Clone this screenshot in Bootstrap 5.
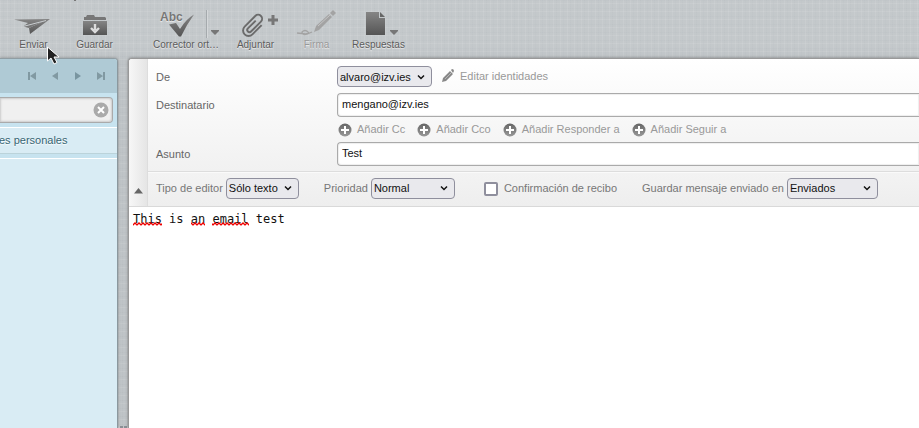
<!DOCTYPE html>
<html lang="es">
<head>
<meta charset="utf-8">
<meta name="viewport" content="width=device-width, initial-scale=1">
<title>Redactar</title>
<link href="https://cdn.jsdelivr.net/npm/bootstrap@5.3.0/dist/css/bootstrap.min.css" rel="stylesheet">
<style>
body{font:11px/16px "Liberation Sans",Arial,sans-serif;color:#666;
 background:repeating-linear-gradient(90deg,rgba(255,255,255,.08) 0 1px,transparent 1px 3px,rgba(70,80,90,.02) 3px 4px,transparent 4px 7px),
 repeating-linear-gradient(0deg,rgba(255,255,255,.08) 0 1px,transparent 1px 3px,rgba(70,80,90,.02) 3px 4px,transparent 4px 8px),#bfc4c7}
.toolbar{height:58px;padding-left:3px;background:linear-gradient(rgba(255,255,255,.08) 80%,rgba(255,255,255,0))}
.tool{width:61px;font-size:10px;line-height:16px;color:#5c5c5c;padding:0;border:0;background:none;text-shadow:0 1px 1px #eee;white-space:nowrap}
.tool svg{display:block;margin:8px auto 0;width:60px;height:29px}
.tool:disabled{color:#999;opacity:1}
.tool-wide{width:66px;margin-left:28px}
.tool-reply{margin-left:1px}
.drop{width:16px;height:28px;margin-top:10px;padding:0 0 0 4px;border:0;background:none}
.drop svg{display:block;margin-top:16px}
.split{margin-left:-13px;margin-right:3px;border-left:1px solid #a5aaad;box-shadow:inset 1px 0 #d5d8da}
.more{margin-left:-23px}
.side{width:118px;border-top:1px solid #909da3;border-right:1px solid #8b989e;background:#d9ecf4;border-radius:0 4px 0 0;box-shadow:0 0 3px #888}
.pager{height:34px;background:#afcad5;border-radius:0 3px 0 0;padding-right:8px;gap:7px}
.pager button{width:16px;height:16px;padding:0;border:0;background:none}
.pager svg,.add svg,.edit svg,.clear svg,.fold svg{display:block}
.find{height:35px;background:#c7e3ef;border-bottom:1px solid #fff;padding:4px 4px 0 0}
.find input{height:26px;width:100%;border:1px solid #aaa;border-left:0;border-radius:0 4px 4px 0;background:#f0f0f0;box-shadow:inset 0 0 2px 1px #ccc;padding:0 24px 0 4px;outline:0}
.clear{right:8px;top:9px;padding:0;border:0;background:none}
.folder{height:26px;line-height:24px;color:#376572;text-decoration:none;border-bottom:1px solid #bbd3da;text-shadow:0 1px 1px #fff;white-space:nowrap;margin-left:-1px}
.space{height:5px;background:#c7e3ef;border-bottom:1px solid #fff}
.splitter{width:10px;gap:1px}
.splitter i{width:3px;height:2px;background:#8a8f95}
.compose{border:solid #999;border-width:1px 0 0 1px;border-radius:4px 0 0 0;background:#fff;box-shadow:0 0 3px #777;overflow:hidden;min-width:0}
.heads{border-bottom:1px solid #d9d9d9;box-shadow:0 1px 2px #eee}
.fold{width:19px;border:0;border-right:1px solid #ddd;background:linear-gradient(90deg,#f7f7f7,#e5e5e5);padding:0 0 12px 5px}
.fields{background:linear-gradient(#fff,#f1f1f1);padding:7px 0 5px 8px;border-bottom:1px solid #ddd}
.line{display:grid;grid-template-columns:181px minmax(0,1fr);align-items:center}
.line-from{margin-bottom:6px}
.txt{height:24px;width:100%;border:1px solid #aaa;border-right:0;border-radius:4px 0 0 4px;padding:0 4px 2px;color:#111;background:#fff;box-shadow:inset 0 0 1px 1px #eee;outline:0}
.pick{height:21px;border:1px solid #8f8f9d;border-radius:4px;color:#111;padding:0 14px 0 2px;appearance:none;
 background:#e9e9ed url("data:image/svg+xml,%3Csvg xmlns='http://www.w3.org/2000/svg' width='8' height='6'%3E%3Cpath d='M1 1.5l3 3 3-3' fill='none' stroke='%23111' stroke-width='1.5'/%3E%3C/svg%3E") no-repeat right 6px center}
.from{width:95px}.kind{width:73px}.prio{width:84px}.sent{width:91px}
.edit,.add{color:#999;text-decoration:none}
.edit{gap:5px;margin-left:9px;padding-bottom:2px}
.add{gap:5px}
.adds{height:25px;gap:12px;padding-left:1px}
.adds span{padding-bottom:1px}
.options{height:34px;padding:0 0 4px 8px;background:linear-gradient(#f3f3f3,#eee);border-top:1px solid #fafafa;white-space:nowrap}
.options label{color:#777}
.options .pick{margin-left:3px;margin-top:1px}
.next{margin-left:25px}
.receipt{width:14px;height:14px;appearance:none;border:2px solid #8f8f9d;border-radius:2px;background:#fff;margin:3px 6px 0 29px}
.message{width:100%;height:100%;min-height:200px;border:0;outline:0;resize:none;display:block;padding:4px;color:#111;font:12px/16px "DejaVu Sans Mono",monospace}
.spell{left:4px;top:15px;pointer-events:none}
.pointer{left:46px;top:46px;pointer-events:none;z-index:5}
.speck{left:74px;top:0;width:2px;height:1px;background:#777}
</style>
<script src="https://cdn.jsdelivr.net/npm/bootstrap@5.3.0/dist/js/bootstrap.bundle.min.js"></script>
</head>
<body class="vh-100 d-flex flex-column overflow-hidden">
<svg width="0" height="0" class="position-absolute" aria-hidden="true"><defs>
<linearGradient id="g" x1="0" y1="0" x2="0" y2="1"><stop stop-color="#858585"/><stop offset="1" stop-color="#555"/></linearGradient>
<linearGradient id="pg" x1="0" y1="0" x2="0" y2="1"><stop stop-color="#666"/><stop offset="1" stop-color="#999"/></linearGradient>
<pattern id="wave" width="4" height="4" patternUnits="userSpaceOnUse"><path d="M-1 3.500L0 3l2-2 2 2 1 .5" fill="none" stroke="#e00" stroke-width="1.3"/></pattern>
<symbol id="plus" viewBox="0 0 14 14"><circle cx="7" cy="7" r="6.5" fill="url(#pg)"/><path d="M7 3v8M3 7h8" stroke="#fff" stroke-width="2"/></symbol>
</defs></svg>
<header class="toolbar d-flex align-items-start flex-shrink-0">
 <button class="tool" type="button"><svg viewBox="0 0 60 29"><path d="M10 11.500L46 11 26 26 25 20 40 13 19 18.500 24 15z" fill="url(#g)"/><path d="M19 18.500L42 12 25 20z" fill="#777"/><path d="M19 18.500L42 12.500" stroke="#c8cccf"/></svg>Enviar</button>
 <button class="tool" type="button"><svg viewBox="0 0 60 29"><path d="M19 12V9h2l1-2h7l1 2h10l1 1v2z" fill="#777"/><path d="M18 13h24v14H18z" fill="url(#g)"/><path d="M30 16v6m-4-2l4 4 4-4" fill="none" stroke="#ddd" stroke-width="2.4"/></svg>Guardar</button>
 <button class="tool tool-wide" type="button"><svg viewBox="0 0 60 29"><text x="4" y="13" font-family="Liberation Sans" font-weight="700" font-size="12" fill="#777">Abc</text><path d="M13 16.500l7-1.500 4 6Q30 11 38 6.500Q31 16 25 28.500H23z" fill="url(#g)"/></svg>Corrector ort…</button>
 <button class="drop split" type="button" aria-label="Opciones del corrector"><svg width="8" height="5"><path d="M0 0h8v1L4 5 0 1z" fill="#777"/></svg></button>
 <button class="tool" type="button"><svg viewBox="0 0 60 29"><path transform="translate(27.500 17.500) rotate(45)" d="M5.500-6V7a5.500 5.500 0 0 1-11 0V-8a4 4 0 0 1 8 0V6a2.200 2.200 0 0 1-4.400 0V-5" fill="none" stroke="#6b6b6b" stroke-width="1.900"/><path d="M47 7v10M42 12h10" stroke="#777" stroke-width="3"/></svg>Adjuntar</button>
 <button class="tool" type="button" disabled><svg viewBox="0 0 60 29"><path d="M10 25q14 2 11-1-3-3-6 0 0 5 10 0" fill="none" stroke="#a3a3a3" stroke-width="1.300"/><path d="M27 24l2-6L42 6l3 3-13 13z" fill="#a3a3a3"/><path d="M43 5l3-3 3 3-3 3z" fill="#a3a3a3"/><path d="M31 18l12-11" stroke="#c4c4c4"/></svg>Firma</button>
 <button class="tool tool-reply" type="button"><svg viewBox="0 0 60 29"><path d="M17 4h13v6h6v17H17z" fill="url(#g)"/><path d="M31 4l5 5h-5z" fill="#666"/></svg>Respuestas</button>
 <button class="drop more" type="button" aria-label="Más respuestas"><svg width="8" height="5"><path d="M0 0h8v1L4 5 0 1z" fill="#777"/></svg></button>
</header>
<main class="d-flex flex-grow-1">
 <aside class="side flex-shrink-0">
  <nav class="pager d-flex align-items-center justify-content-end" aria-label="Páginas">
   <button type="button" aria-label="Primera"><svg width="16" height="16"><path d="M4 4h2v8H4zM12 4v8L6 8z" fill="#8199a2"/></svg></button>
   <button type="button" aria-label="Anterior"><svg width="16" height="16"><path d="M11 4v8L5 8z" fill="#8199a2"/></svg></button>
   <button type="button" aria-label="Siguiente"><svg width="16" height="16"><path d="M5 4v8l6-4z" fill="#7995a0"/></svg></button>
   <button type="button" aria-label="Última"><svg width="16" height="16"><path d="M10 4h2v8h-2zM4 4v8l6-4z" fill="#8199a2"/></svg></button>
  </nav>
  <div class="find position-relative"><input type="text" aria-label="Buscar contactos"><button class="clear position-absolute" type="button" aria-label="Borrar"><svg width="16" height="16"><circle cx="8" cy="8" r="7.5" fill="#aaa"/><path d="M5 5l6 6m0-6l-6 6" stroke="#fff" stroke-width="2"/></svg></button></div>
  <a class="folder d-block" href="#">es personales</a>
  <div class="space"></div>
 </aside>
 <div class="splitter d-flex align-items-end justify-content-center flex-shrink-0"><i></i><i></i></div>
 <form class="compose flex-grow-1 d-flex flex-column">
  <div class="heads d-flex flex-shrink-0">
   <button class="fold d-flex align-items-end flex-shrink-0" type="button" aria-label="Plegar cabeceras"><svg width="9" height="6"><path d="M4.500 0L9 5.500H0z" fill="#666"/></svg></button>
   <div class="flex-grow-1 overflow-hidden">
    <div class="fields">
     <div class="line line-from"><label for="from">De</label><div class="d-flex align-items-center"><select class="pick from" id="from"><option>alvaro@izv.ies</option></select><a class="edit d-flex align-items-center" href="#"><svg width="14" height="14"><path d="M1 13l1-4 7-7 3 3-7 7zM10 1l1-1q2 0 2 2l-1 2z" fill="#888"/><path d="M4 10l6-6M9 2l3 3" stroke="#ccc" stroke-width=".7"/></svg><span>Editar identidades</span></a></div></div>
     <div class="line"><label for="to">Destinatario</label><input class="txt" id="to" type="text" value="mengano@izv.ies"></div>
     <div class="line"><span></span><div class="adds d-flex align-items-center">
      <a class="add d-flex align-items-center" href="#"><svg width="14" height="14"><use href="#plus"/></svg><span>Añadir Cc</span></a>
      <a class="add d-flex align-items-center" href="#"><svg width="14" height="14"><use href="#plus"/></svg><span>Añadir Cco</span></a>
      <a class="add d-flex align-items-center" href="#"><svg width="14" height="14"><use href="#plus"/></svg><span>Añadir Responder a</span></a>
      <a class="add d-flex align-items-center" href="#"><svg width="14" height="14"><use href="#plus"/></svg><span>Añadir Seguir a</span></a>
     </div></div>
     <div class="line"><label for="subject">Asunto</label><input class="txt" id="subject" type="text" value="Test"></div>
    </div>
    <div class="options d-flex align-items-center">
     <label for="kind">Tipo de editor</label><select class="pick kind" id="kind"><option>Sólo texto</option></select>
     <label class="next" for="prio">Prioridad</label><select class="pick prio" id="prio"><option>Normal</option></select>
     <input class="receipt" type="checkbox" id="receipt"><label for="receipt">Confirmación de recibo</label>
     <label class="next" for="sent">Guardar mensaje enviado en</label><select class="pick sent" id="sent"><option>Enviados</option></select>
    </div>
   </div>
  </div>
  <div class="flex-grow-1 position-relative"><textarea class="message" spellcheck="false" aria-label="Mensaje">This is an email test</textarea>
   <svg class="spell position-absolute" width="120" height="4" aria-hidden="true"><path d="M0 0h29v4H0zM58 0h14v4H58zM79 0h37v4H79z" fill="url(#wave)"/></svg></div>
 </form>
</main>
<span class="speck position-absolute"></span>
<svg class="pointer position-absolute" width="14" height="20" aria-hidden="true"><path d="M1.500 1v14l3.500-3 3 6 3-1.500-3-5.500h5z" fill="#222" stroke="#fff"/></svg>
</body>
</html>
